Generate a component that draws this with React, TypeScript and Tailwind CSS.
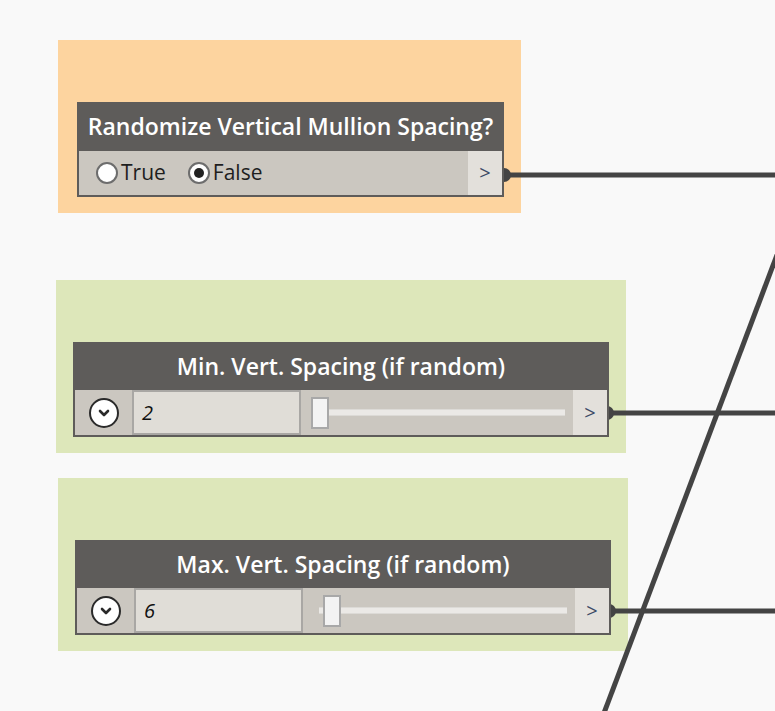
import React from "react";

const FONT = { fontFamily: '"Open Sans", "Noto Sans", sans-serif' };

function Port() {
  return (
    <div className="flex w-[34px] items-center justify-center bg-[#e3e0db] text-[20px] text-[#3b4a66]">
      &gt;
    </div>
  );
}

function Radio({ label, checked }: { label: string; checked?: boolean }) {
  return (
    <div className="flex items-center">
      <span className="flex h-[22px] w-[22px] items-center justify-center rounded-full border-2 border-[#6d6d6d] bg-white">
        {checked && <span className="h-[10px] w-[10px] rounded-full bg-[#222]" />}
      </span>
      <span className="ml-[3px] text-[21px] text-[#1e1e1e]">{label}</span>
    </div>
  );
}

function BoolNode() {
  return (
    <div className="absolute left-[77px] top-[102px] w-[427px] border-2 border-[#5e5c5a]">
      <div className="flex h-[47px] items-center justify-center bg-[#5e5c5a] pb-[2px] text-[23px] font-semibold text-white">
        Randomize Vertical Mullion Spacing?
      </div>
      <div className="flex h-[44px] bg-[#cbc7c0]">
        <div className="flex flex-1 items-center gap-[22px] pl-[17px]">
          <Radio label="True" />
          <Radio label="False" checked />
        </div>
        <Port />
      </div>
    </div>
  );
}

function SliderNode({
  left,
  top,
  title,
  value,
  thumb,
}: {
  left: number;
  top: number;
  title: string;
  value: string;
  thumb: number;
}) {
  return (
    <div className="absolute w-[536px] border-2 border-[#5e5c5a]" style={{ left, top }}>
      <div className="flex h-[46px] items-center justify-center bg-[#5e5c5a] pb-[2px] text-[23px] font-semibold text-white">
        {title}
      </div>
      <div className="flex h-[45px] bg-[#cbc7c0]">
        <div className="flex w-[57px] items-center justify-center">
          <span className="flex h-[30px] w-[30px] items-center justify-center rounded-full border-2 border-[#2a2a2a] bg-white">
            <svg width="12" height="8" viewBox="0 0 12 8">
              <path d="M2 2 L6 6 L10 2" fill="none" stroke="#2a2a2a" strokeWidth="2.6" strokeLinecap="round" strokeLinejoin="round" />
            </svg>
          </span>
        </div>
        <div className="flex w-[169px] items-center border-2 border-[#a9a7a4] bg-[#e0ddd7] pl-[8px] text-[20px] italic text-[#111]">
          {value}
        </div>
        <div className="relative flex-1">
          <div className="absolute left-[16px] right-[8px] top-[19px] h-[7px] border-y border-[#dcdad6] bg-[#ebe9e6]" />
          <div
            className="absolute top-[7px] h-[32px] w-[18px] border-2 border-[#a8a8a8] bg-[#f3f3f3]"
            style={{ left: thumb }}
          />
        </div>
        <Port />
      </div>
    </div>
  );
}

export default function App() {
  return (
    <div className="relative h-[711px] w-[775px] overflow-hidden bg-[#f9f9f9]" style={FONT}>
      <div className="absolute left-[58px] top-[40px] h-[173px] w-[463px] bg-[#fdd49f]" />
      <div className="absolute left-[56px] top-[280px] h-[173px] w-[570px] bg-[#dde7ba]" />
      <div className="absolute left-[58px] top-[478px] h-[173px] w-[570px] bg-[#dde7ba]" />

      <svg className="absolute left-0 top-0" width="775" height="711">
        <g stroke="#444" strokeWidth="5" fill="none">
          <line x1="506" y1="175" x2="775" y2="175" />
          <line x1="609" y1="413" x2="775" y2="413" />
          <line x1="611" y1="611" x2="775" y2="611" />
          <line x1="777" y1="255" x2="604" y2="713" />
        </g>
        <g fill="#444">
          <path d="M504 168 A7 7 0 0 1 504 182 Z" />
          <path d="M607 406 A7 7 0 0 1 607 420 Z" />
          <path d="M609 604 A7 7 0 0 1 609 618 Z" />
        </g>
      </svg>

      <BoolNode />
      <SliderNode left={73} top={342} title="Min. Vert. Spacing (if random)" value="2" thumb={10} />
      <SliderNode left={75} top={540} title="Max. Vert. Spacing (if random)" value="6" thumb={20} />
    </div>
  );
}
